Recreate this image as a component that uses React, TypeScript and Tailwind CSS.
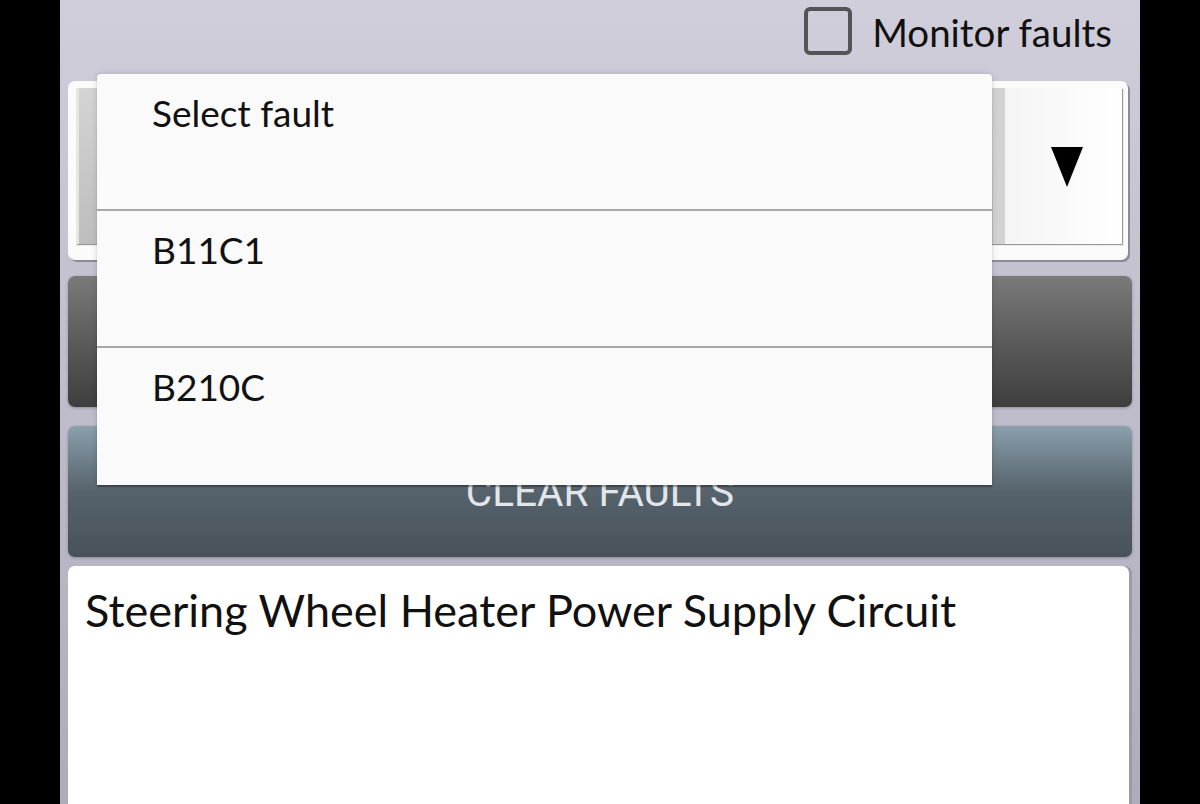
import React from "react";

function Triangle() {
  return (
    <svg width="34" height="42" viewBox="0 0 34 42" className="block">
      <defs>
        <filter id="blur1" x="-10%" y="-10%" width="120%" height="120%">
          <feGaussianBlur stdDeviation="0.7" />
        </filter>
      </defs>
      <polygon points="1,1 33,1 17,41" fill="#000" filter="url(#blur1)" />
    </svg>
  );
}

export default function App() {
  const font = { fontFamily: "Lato, 'Noto Sans', sans-serif" };
  return (
    <div className="w-[1200px] h-[804px] bg-black flex justify-center overflow-hidden" style={font}>
      <div className="relative w-[1080px] h-[804px] bg-gradient-to-b from-[#d0cedb] to-[#aeabbb] flex flex-col">
        {/* top row */}
        <div className="h-[62px] flex items-center justify-end pr-[28px] gap-[20px]">
          <div className="w-[48px] h-[48px] rounded-[6px] border-[4px] border-[#545458]" />
          <span className="text-[38.5px] leading-none text-[#111] mt-[2px]">Monitor faults</span>
        </div>

        {/* spinner */}
        <div className="mt-[19px] ml-[8px] mr-[12px] h-[179px] rounded-[7px] bg-[#fbfbfb] shadow-[2px_2px_0_#8c8a94] pt-[7px] pl-[8px] pr-[6px] pb-[16px] flex">
          <div className="flex-1 flex bg-gradient-to-b from-[#d4d4d4] to-[#bdbdbd] shadow-[1px_1px_1px_#999]">
            <div className="w-[3px] bg-[#e6e6e6]" />
            <div className="flex-1" />
            <div className="w-[12px] bg-[#d2d2d2]" />
            <div className="w-[117px] bg-gradient-to-r from-[#f4f4f4] to-[#ffffff] flex items-center justify-center pl-[7px] pt-[2px]">
              <Triangle />
            </div>
          </div>
        </div>

        {/* dark button */}
        <div className="mt-[16px] ml-[8px] mr-[8px] h-[131px] rounded-[7px] bg-gradient-to-b from-[#7a7a7a] to-[#3e3e3e] shadow-[0_1px_3px_rgba(0,0,0,0.25)]" />

        {/* clear faults */}
        <div className="mt-[19px] ml-[8px] mr-[8px] h-[131px] rounded-[7px] bg-gradient-to-b from-[#8aa0ad] via-[#56636c] to-[#48515a] shadow-[0_1px_3px_rgba(0,0,0,0.25)] flex items-center justify-center">
          <span className="text-[40.5px] leading-none text-[#e2e6ea] mt-[2px]" style={{ fontFamily: "Roboto, 'Liberation Sans', sans-serif" }}>
            CLEAR FAULTS
          </span>
        </div>

        {/* text box */}
        <div className="mt-[9px] ml-[8px] mr-[11px] flex-1 rounded-t-[7px] bg-white shadow-[3px_0_0_#9d9aa8] pl-[17px] pt-[22px]">
          <div className="text-[45px] leading-none text-[#111]">Steering Wheel Heater Power Supply Circuit</div>
        </div>

        {/* dropdown */}
        <div className="absolute left-[37px] top-[74px] w-[895px] rounded-t-[4px] bg-[#fafafa] shadow-[0_2px_1px_rgba(0,0,0,0.3),0_0_6px_rgba(0,0,0,0.15)] flex flex-col">
          {["Select fault", "B11C1", "B210C"].map((t, i) => (
            <div
              key={t}
              className={
                "h-[137px] pl-[55px] pt-[20px] text-[37px] leading-none text-[#111] " +
                (i < 2 ? "border-b-[2px] border-[#a8a8a8]" : "")
              }
            >
              {t}
            </div>
          ))}
        </div>
      </div>
    </div>
  );
}
